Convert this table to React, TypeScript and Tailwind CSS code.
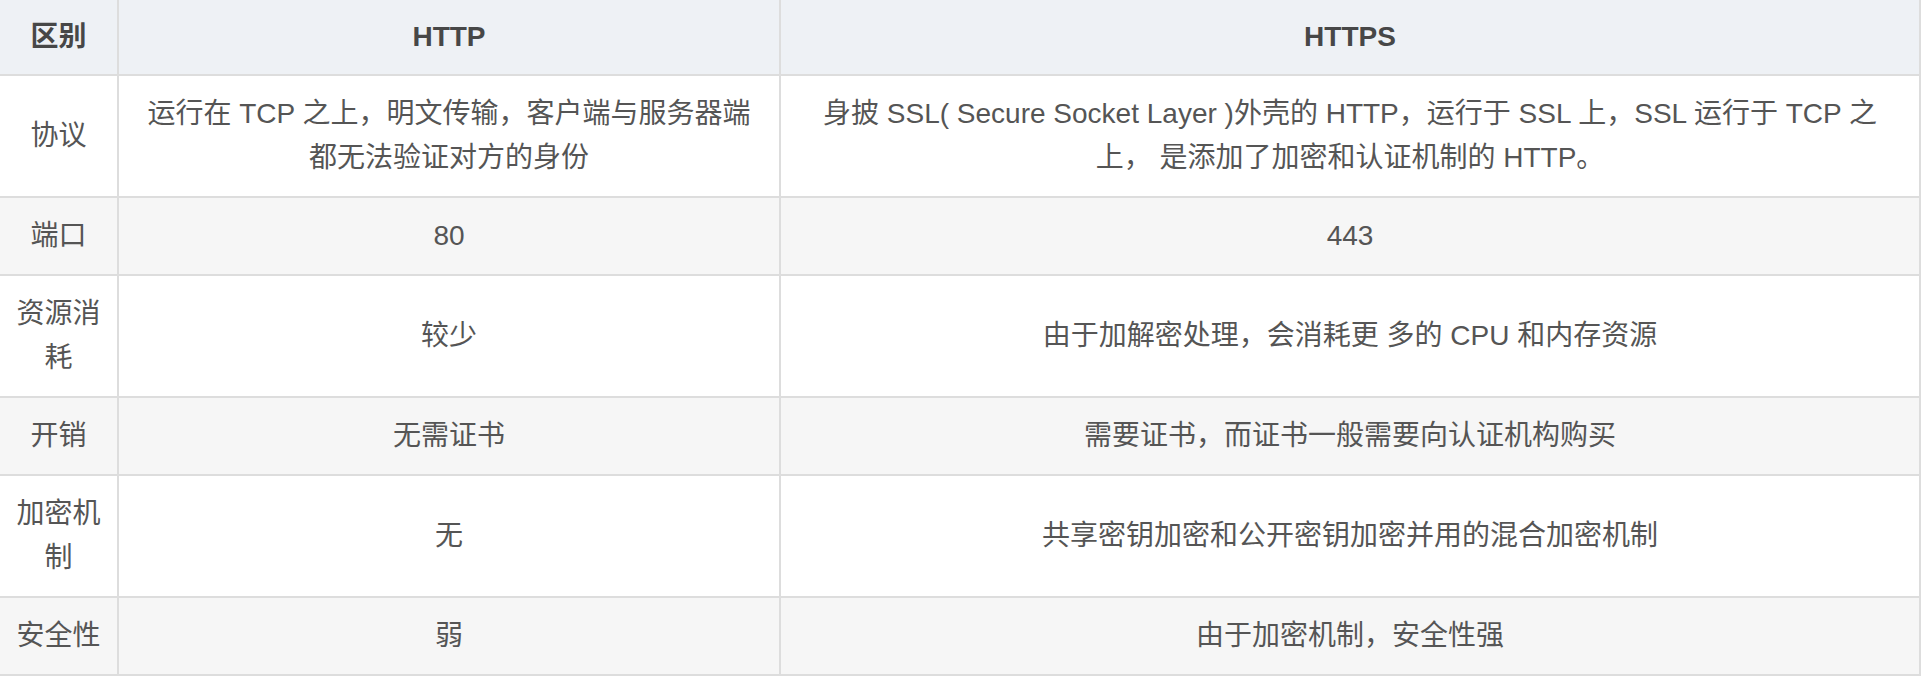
const rows = [
  {
    key: '协议',
    http: '运行在 TCP 之上，明文传输，客户端与服务器端都无法验证对方的身份',
    https: '身披 SSL( Secure Socket Layer )外壳的 HTTP，运行于 SSL 上，SSL 运行于 TCP 之上， 是添加了加密和认证机制的 HTTP。',
  },
  { key: '端口', http: '80', https: '443' },
  { key: '资源消耗', http: '较少', https: '由于加解密处理，会消耗更 多的 CPU 和内存资源' },
  { key: '开销', http: '无需证书', https: '需要证书，而证书一般需要向认证机构购买' },
  { key: '加密机制', http: '无', https: '共享密钥加密和公开密钥加密并用的混合加密机制' },
  { key: '安全性', http: '弱', https: '由于加密机制，安全性强' },
];

export default function App() {
  return (
    <div className="min-h-[682px] w-full bg-white font-['Liberation_Sans','Noto_Sans_CJK_SC',sans-serif] text-[28px] leading-[44px] text-[#555]">
      <table className="w-[1921px] table-fixed border-collapse text-center">
        <thead>
          <tr className="bg-[#eef1f5]">
            <th className="w-[118px] border-2 border-t-0 border-l-0 border-[#dddddd] px-3 py-[15px] font-bold text-[#474747]">区别</th>
            <th className="w-[662px] border-2 border-t-0 border-[#dddddd] px-5 py-[15px] font-bold text-[#474747]">HTTP</th>
            <th className="border-2 border-t-0 border-[#dddddd] px-5 py-[15px] font-bold text-[#474747]">HTTPS</th>
          </tr>
        </thead>
        <tbody>
          {rows.map((r, i) => (
            <tr key={r.key} className={i % 2 === 1 ? 'bg-[#f6f6f6]' : 'bg-white'}>
              <td className="border-2 border-l-0 border-[#dddddd] px-3 py-4">{r.key}</td>
              <td className="border-2 border-[#dddddd] px-5 py-4">{r.http}</td>
              <td className="border-2 border-[#dddddd] px-5 py-4">{r.https}</td>
            </tr>
          ))}
        </tbody>
      </table>
    </div>
  );
}
